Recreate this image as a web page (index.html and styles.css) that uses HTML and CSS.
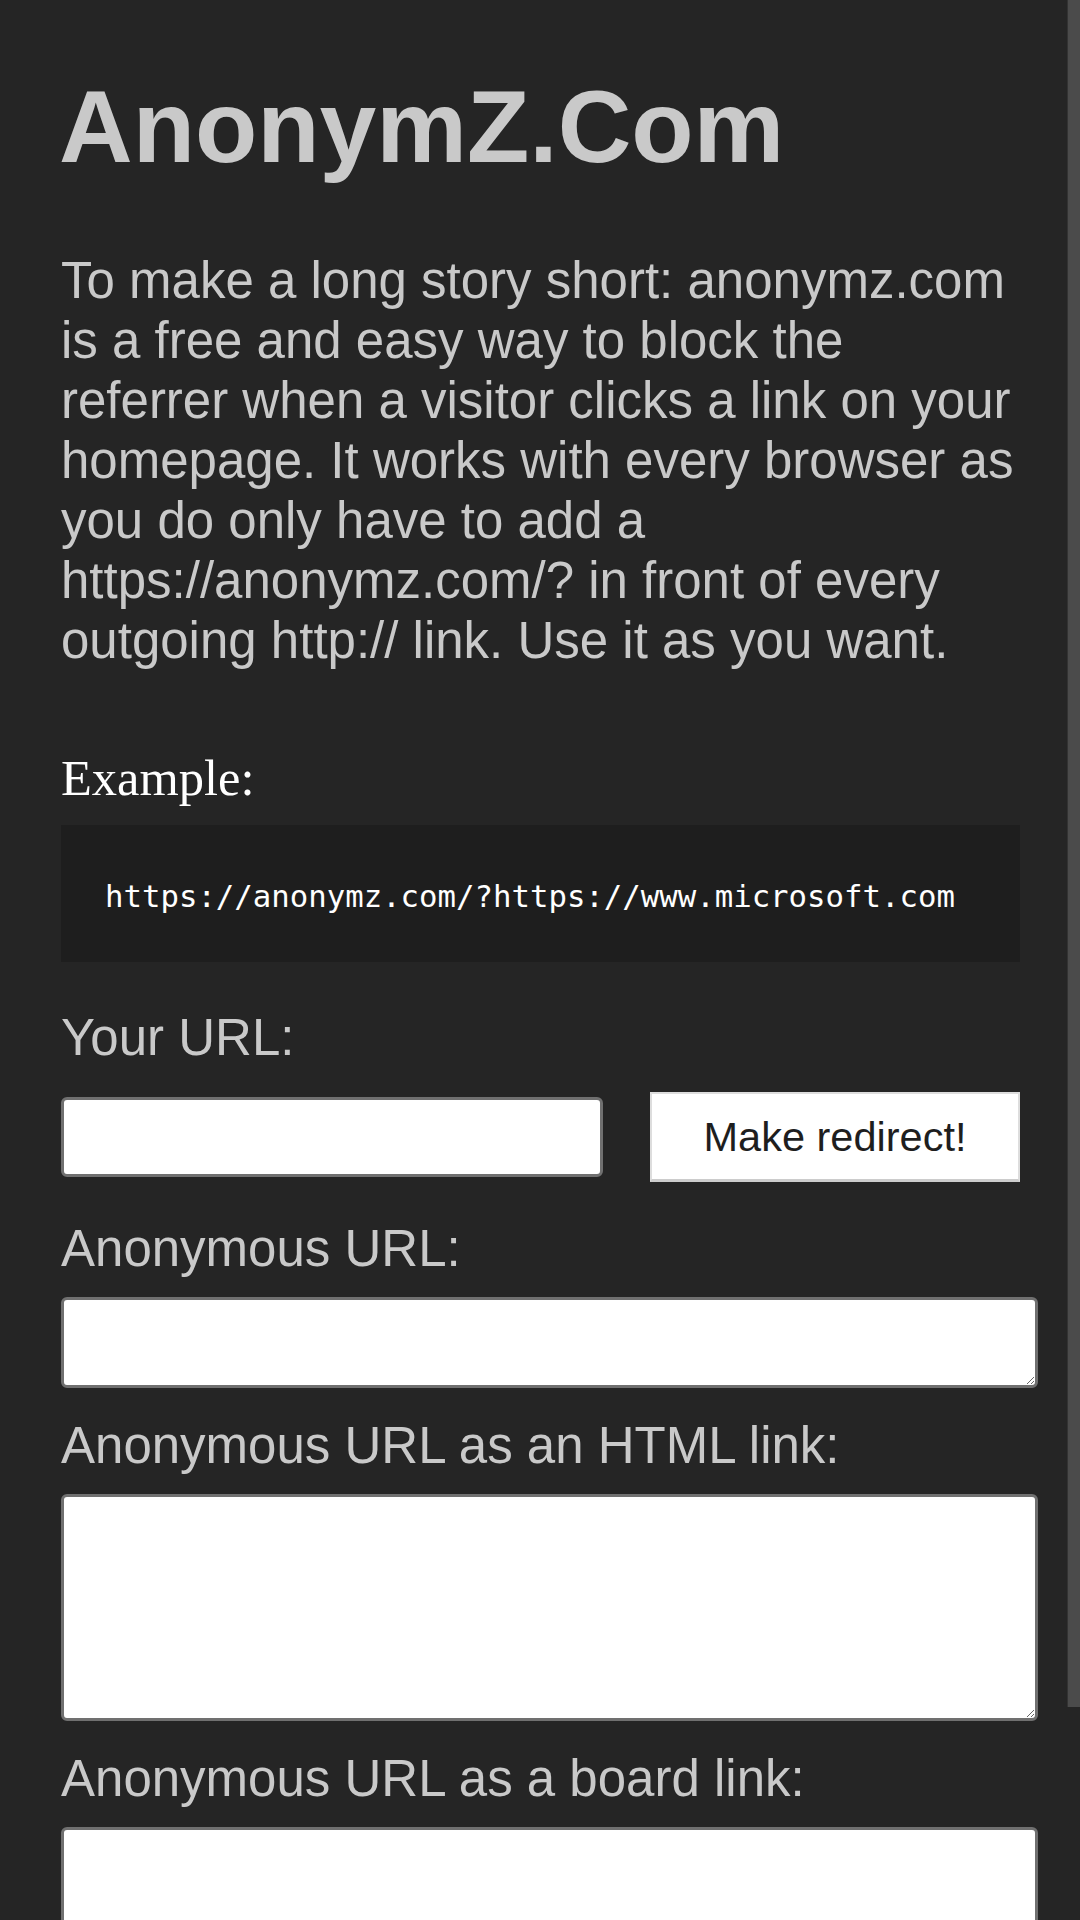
FILE: index.html
```html
<!DOCTYPE html>
<html lang="en">

<head>
  <meta charset="UTF-8">
  <meta name="viewport" content="width=device-width, initial-scale=1.0">
  <title>AnonymZ.Com</title>

  <link rel="stylesheet" href="styles.css">
</head>

<body>
  <main class="page">
    <h1 class="title">AnonymZ.Com</h1>

    <p class="intro">To make a long story short: anonymz.com is a free and easy way to block the referrer when a visitor clicks a link on your homepage. It works with every browser as you do only have to add a https://anonymz.com/? in front of every outgoing http:// link. Use it as you want.</p>

    <h3 class="example_title">Example:</h3>
    <pre class="example">https://anonymz.com/?https://www.microsoft.com</pre>

    <label class="label label_first" for="url">Your URL:</label>
    <div class="url_row">
      <input type="text" id="url" name="url" class="url_input" />
      <button type="button" class="make_btn">Make redirect!</button>
    </div>

    <label class="label label_anon" for="anon">Anonymous URL:</label>
    <textarea id="anon" class="output output_small"></textarea>

    <label class="label" for="html">Anonymous URL as an HTML link:</label>
    <textarea id="html" class="output output_big"></textarea>

    <label class="label" for="board">Anonymous URL as a board link:</label>
    <textarea id="board" class="output output_big"></textarea>
  </main>

  <div class="scrollbar"></div>
</body>

</html>
```

FILE: styles.css
```css
body {
  margin: 0;
  background-color: #252525;
  color: #c9c9c9;
  font-family: "Liberation Sans", Arial, sans-serif;
}

.page {
  width: 959px;
  padding: 67px 0 80px 61px;
}

.title {
  margin: 0 0 0 -2px;
  font-size: 102px;
  line-height: 120px;
  font-weight: bold;
  color: #c9c9c9;
}

.intro {
  margin: 63.5px 0 0 0;
  font-size: 51px;
  line-height: 60px;
}

.example_title {
  margin: 77.5px 0 0 0;
  font-family: "Liberation Serif", "Times New Roman", serif;
  font-size: 50.5px;
  line-height: 60px;
  font-weight: normal;
  color: #ffffff;
}

.example {
  margin: 17px 0 0 0;
  height: 120px;
  padding: 12px 0 5px 44px;
  background-color: #1e1e1e;
  color: #ffffff;
  font-family: "DejaVu Sans Mono", "Liberation Mono", monospace;
  font-size: 30.7px;
  line-height: 120px;
}

.label {
  display: block;
  margin-top: 27.5px;
  font-size: 51px;
  line-height: 60px;
}

.label_first {
  margin-top: 45.5px;
}

.label_anon {
  margin-top: 36.5px;
}

.url_row {
  display: flex;
  justify-content: space-between;
  align-items: center;
  margin-top: 24.5px;
  height: 90px;
}

.url_input {
  box-sizing: border-box;
  width: 542px;
  height: 80px;
  margin: 0;
  border: 3px solid #707070;
  border-radius: 6px;
  background-color: #ffffff;
  font-size: 40px;
  padding: 0 10px;
}

.make_btn {
  box-sizing: border-box;
  width: 370px;
  height: 90px;
  margin: 0;
  background-color: #ffffff;
  border: 2px solid #dddddd;
  border-bottom: 3px solid #cccccc;
  border-radius: 0;
  color: #1e1e1e;
  font-family: "Liberation Sans", Arial, sans-serif;
  font-size: 41.5px;
}

.output {
  display: block;
  width: 100%;
  margin: 18.5px 0 0 0;
  padding: 5px 6px;
  border: 3px solid #707070;
  border-radius: 6px;
  background-color: #ffffff;
  font-size: 40px;
}

.output_small {
  height: 75px;
}

.output_big {
  height: 211px;
}

.scrollbar {
  position: fixed;
  top: 0;
  right: 0;
  width: 12px;
  height: 1707px;
  background-color: #4b4b4b;
  border-left: 1px solid #333333;
}
```
